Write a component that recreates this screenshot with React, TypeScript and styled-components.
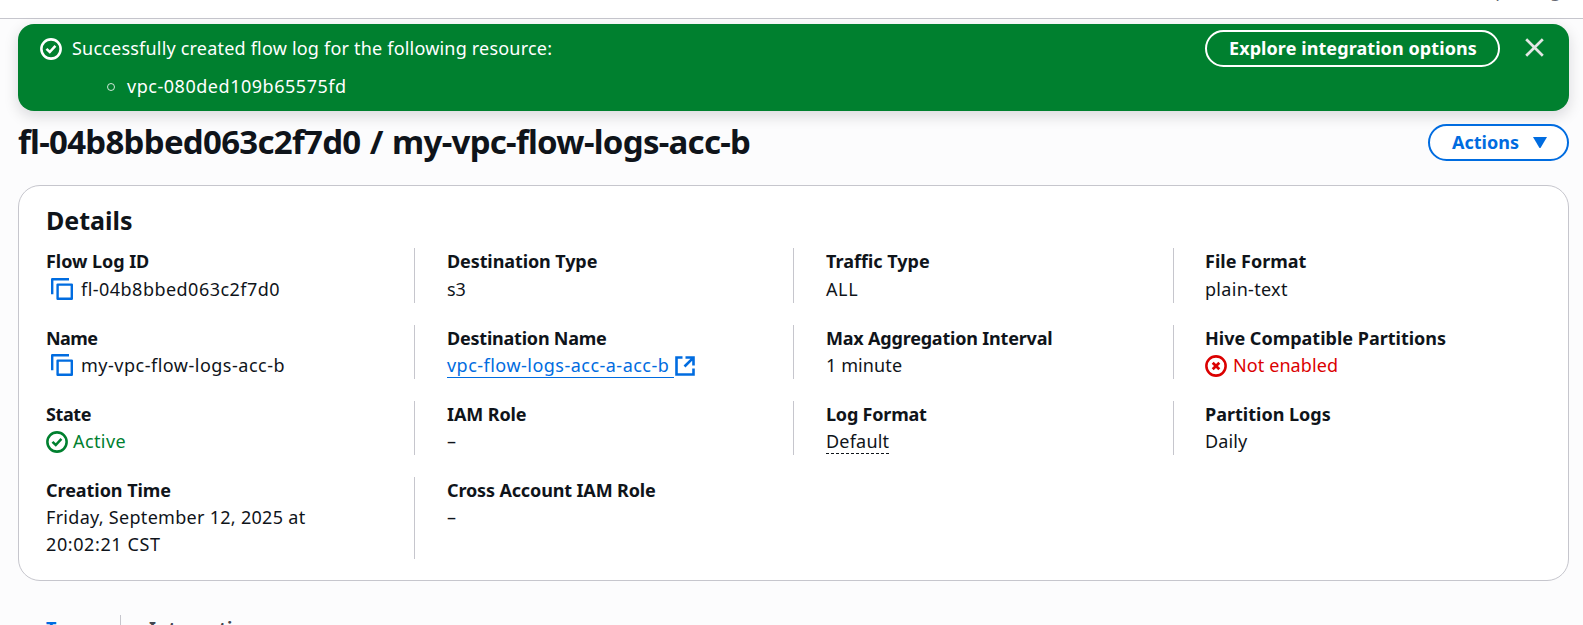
import React from "react";
import styled, { createGlobalStyle } from "styled-components";

const Global = createGlobalStyle`
  * { box-sizing: border-box; }
  body { margin: 0; background: #fcfcfd; overflow: hidden; }
`;

const Page = styled.div`
  height: 625px;
  overflow: hidden;
  font-family: "Noto Sans", "Liberation Sans", sans-serif;
  font-size: 18px;
  line-height: 27px;
  color: #0f141a;
`;

const Txt = styled.span<{ $ls?: number }>`
  letter-spacing: ${(p) => p.$ls ?? 0}px;
  white-space: nowrap;
`;

const TopBar = styled.header`
  height: 19px;
  background: #fff;
  border-bottom: 1px solid #c6c6cd;
  display: flex;
  justify-content: flex-end;
  align-items: flex-start;
  overflow: hidden;
  padding-right: 22px;
  line-height: 24px;
  color: #656871;
`;

const TopText = styled.span`
  margin-top: -22px;
  height: 24px;
`;

const Main = styled.main`
  padding: 5px 14px 0 18px;
`;

const Banner = styled.section`
  height: 87px;
  border-radius: 16px;
  background: #00802f;
  color: #fff;
  display: flex;
  align-items: flex-start;
  padding: 6px 25px 0 22px;
  box-shadow: 0 5px 14px 1px rgba(0, 7, 22, 0.13);
`;

const BannerIcon = styled.div`
  display: flex;
  margin: 8px 10px 0 0;
`;

const BannerBody = styled.div`
  flex: 1;
  padding-top: 5px;
`;

const List = styled.ul`
  list-style: none;
  margin: 11px 0 0;
  padding: 0 0 0 35px;
`;

const ListItem = styled.li`
  display: flex;
  align-items: center;
  gap: 12px;
`;

const Ring = styled.i`
  width: 8px;
  height: 8px;
  border: 1.5px solid #fff;
  border-radius: 50%;
  opacity: 0.8;
`;

const Button = styled.button<{ $w: number; $tone: "light" | "blue" }>`
  width: ${(p) => p.$w}px;
  height: 37px;
  flex: none;
  display: flex;
  align-items: center;
  justify-content: flex-start;
  gap: 14px;
  padding: 0 0 0 22px;
  border: 2px solid ${(p) => (p.$tone === "light" ? "#fff" : "#006ce0")};
  border-radius: 19px;
  background: ${(p) => (p.$tone === "light" ? "transparent" : "#fff")};
  color: ${(p) => (p.$tone === "light" ? "#fff" : "#006ce0")};
  font: 700 18px/27px "Noto Sans", sans-serif;
`;

const Close = styled.div`
  display: flex;
  margin: 8px 0 0 25px;
`;

const TitleRow = styled.div`
  height: 74px;
  display: flex;
  justify-content: space-between;
  align-items: flex-start;
  padding-top: 13px;
`;

const Title = styled.h1`
  margin: -3px 0 0;
  font-size: 33px;
  line-height: 41px;
  font-weight: 700;
  word-spacing: 1.5px;
`;

const Card = styled.section`
  height: 396px;
  border: 1px solid #c6c6cd;
  border-radius: 22px;
  background: #fff;
  padding: 17px 27px 0;
`;

const CardTitle = styled.h2`
  margin: 0 0 11px;
  font-size: 25px;
  line-height: 34px;
  font-weight: 700;
`;

const Grid = styled.div`
  display: grid;
  grid-template-columns: 368px 379px 380px 1fr;
  grid-template-rows: 55px 54px 54px 82px;
  row-gap: 22px;
`;

const Cell = styled.div<{ $first?: boolean; $inset?: number; $gap?: number }>`
  display: flex;
  flex-direction: column;
  justify-content: flex-start;
  gap: ${(p) => p.$gap ?? 0}px;
  border-left: ${(p) => (p.$first ? "0" : "1px solid #c6c6cd")};
  padding-left: ${(p) => (p.$first ? 0 : p.$inset ?? 32)}px;
`;

const Label = styled.div`
  font-weight: 700;
`;

const Value = styled.div<{ $color?: string; $pad?: number; $gap?: number }>`
  display: flex;
  align-items: center;
  height: 27px;
  gap: ${(p) => p.$gap ?? 0}px;
  padding-left: ${(p) => p.$pad ?? 0}px;
  color: ${(p) => p.$color ?? "inherit"};
`;

const Link = styled.a`
  align-self: flex-start;
  color: #006ce0;
  height: 26px;
  width: 227px;
  border-bottom: 1px solid #006ce0;
`;

const Dashed = styled.span`
  align-self: flex-start;
  height: 26px;
  border-bottom: 1px dashed #0f141a;
`;

const Tabs = styled.nav`
  display: flex;
  margin-top: 34px;
  padding-left: 28px;
  font-weight: 700;
`;

const Tab = styled.span<{ $active?: boolean; $w?: number }>`
  color: ${(p) => (p.$active ? "#006ce0" : "#424650")};
  width: ${(p) => (p.$w ? `${p.$w}px` : "auto")};
  height: 27px;
`;

const TabDivider = styled.i`
  width: 1px;
  height: 27px;
  background: #c6c6cd;
  margin-right: 28px;
`;

const CheckIcon = () => (
  <svg width="22" height="22" viewBox="0 0 16 16" fill="none" stroke="currentColor" strokeWidth="1.85">
    <circle cx="8" cy="8" r="7" />
    <path d="m4.7 7.9 2.4 2.3 4.1-4.4" />
  </svg>
);

const CrossCircle = () => (
  <svg width="22" height="22" viewBox="0 0 16 16" fill="none" stroke="currentColor" strokeWidth="1.85">
    <circle cx="8" cy="8" r="7" />
    <path d="m5.6 5.6 4.8 4.8M10.4 5.6l-4.8 4.8" strokeWidth="2" />
  </svg>
);

const CopySvg = styled.svg`
  margin-bottom: 1px;
`;

const CopyIcon = () => (
  <CopySvg width="22" height="22" viewBox="0 0 22 22" fill="none" stroke="#006ce0" strokeWidth="2.4" strokeLinejoin="round">
    <path d="M1.2 16.3V1.2H18" />
    <path d="M6.6 6.6h14.2v14.2H6.6z" />
  </CopySvg>
);

const ExternalIcon = () => (
  <svg width="20" height="20" viewBox="0 0 20 20" fill="none" stroke="#006ce0" strokeWidth="2.6">
    <path d="M7.5 1.5H1.5v17h17v-6M10.5 1.5h8v8M18.2 1.8 9.5 10.5" />
  </svg>
);

export default function App() {
  return (
    <Page>
      <Global />
      <TopBar>
        <TopText>peering</TopText>
      </TopBar>
      <Main>
        <Banner>
          <BannerIcon><CheckIcon /></BannerIcon>
          <BannerBody>
            <Txt $ls={0.2}>Successfully created flow log for the following resource:</Txt>
            <List>
              <ListItem><Ring /><Txt $ls={0.53}>vpc-080ded109b65575fd</Txt></ListItem>
            </List>
          </BannerBody>
          <Button $w={295} $tone="light"><Txt $ls={0.08}>Explore integration options</Txt></Button>
          <Close>
            <svg width="19" height="19" viewBox="0 0 19 19" stroke="#e3e6e4" strokeWidth="2.7">
              <path d="m1.2 1.2 16.6 16.6M17.8 1.2 1.2 17.8" />
            </svg>
          </Close>
        </Banner>
        <TitleRow>
          <Title><Txt $ls={-0.72}>fl-04b8bbed063c2f7d0 / my-vpc-flow-logs-acc-b</Txt></Title>
          <Button $w={141} $tone="blue">
            <Txt>Actions</Txt>
            <svg width="14" height="11" viewBox="0 0 14 11" fill="currentColor"><path d="M0 0h14L7.8 10.4q-.8 1-1.6 0z" /></svg>
          </Button>
        </TitleRow>
        <Card>
          <CardTitle><Txt>Details</Txt></CardTitle>
          <Grid>
            <Cell $first $gap={1}><Label><Txt $ls={-0.05}>Flow Log ID</Txt></Label><Value $pad={5} $gap={8}><CopyIcon /><Txt $ls={0.47}>fl-04b8bbed063c2f7d0</Txt></Value></Cell>
            <Cell $gap={1}><Label><Txt $ls={-0.1}>Destination Type</Txt></Label><Value><Txt>s3</Txt></Value></Cell>
            <Cell $gap={1}><Label><Txt>Traffic Type</Txt></Label><Value><Txt $ls={0.6}>ALL</Txt></Value></Cell>
            <Cell $gap={1} $inset={31}><Label><Txt>File Format</Txt></Label><Value><Txt $ls={0.3}>plain-text</Txt></Value></Cell>

            <Cell $first><Label><Txt $ls={-0.6}>Name</Txt></Label><Value $pad={5} $gap={8}><CopyIcon /><Txt $ls={0.5}>my-vpc-flow-logs-acc-b</Txt></Value></Cell>
            <Cell><Label><Txt $ls={-0.22}>Destination Name</Txt></Label><Value $gap={1}><Link><Txt $ls={0.48}>vpc-flow-logs-acc-a-acc-b</Txt></Link><ExternalIcon /></Value></Cell>
            <Cell><Label><Txt $ls={-0.2}>Max Aggregation Interval</Txt></Label><Value><Txt $ls={0.1}>1 minute</Txt></Value></Cell>
            <Cell $inset={31}><Label><Txt>Hive Compatible Partitions</Txt></Label><Value $color="#db0000" $gap={6}><CrossCircle /><Txt $ls={0.1}>Not enabled</Txt></Value></Cell>

            <Cell $first><Label><Txt $ls={-0.4}>State</Txt></Label><Value $color="#00802f" $gap={5}><CheckIcon /><Txt $ls={0.4}>Active</Txt></Value></Cell>
            <Cell><Label><Txt $ls={-0.1}>IAM Role</Txt></Label><Value><Txt>–</Txt></Value></Cell>
            <Cell><Label><Txt $ls={-0.2}>Log Format</Txt></Label><Value><Dashed><Txt $ls={0.2}>Default</Txt></Dashed></Value></Cell>
            <Cell $inset={31}><Label><Txt>Partition Logs</Txt></Label><Value><Txt $ls={0.1}>Daily</Txt></Value></Cell>

            <Cell $first><Label><Txt $ls={-0.05}>Creation Time</Txt></Label><Value><Txt $ls={0.29}>Friday, September 12, 2025 at</Txt></Value><Value><Txt $ls={0.6}>20:02:21 CST</Txt></Value></Cell>
            <Cell><Label><Txt $ls={-0.14}>Cross Account IAM Role</Txt></Label><Value><Txt>–</Txt></Value></Cell>
          </Grid>
        </Card>
        <Tabs>
          <Tab $active $w={74}><Txt $ls={0.6}>Tags</Txt></Tab>
          <TabDivider />
          <Tab><Txt $ls={0.4}>Integrations</Txt></Tab>
        </Tabs>
      </Main>
    </Page>
  );
}
